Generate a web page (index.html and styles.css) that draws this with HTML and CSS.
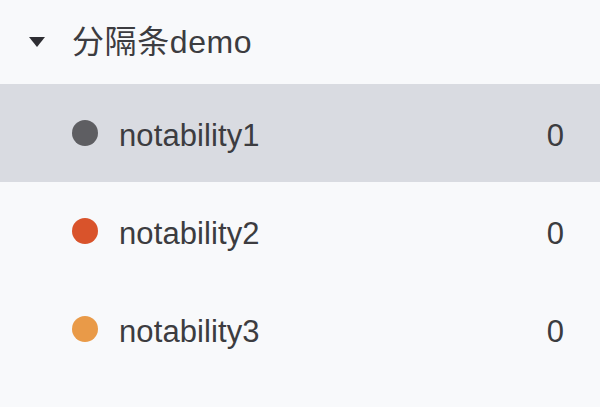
FILE: index.html
```html
<!DOCTYPE html>
<html lang="zh">
<head>
<meta charset="utf-8">
<link rel="stylesheet" href="styles.css">
</head>
<body>
<div class="tree">
  <div class="group-head">
    <span class="caret"></span>
    <span class="group-title">分隔条demo</span>
  </div>
  <div class="item active">
    <span class="dot dot-gray"></span>
    <span class="name">notability1</span>
    <span class="count">0</span>
  </div>
  <div class="item">
    <span class="dot dot-red"></span>
    <span class="name">notability2</span>
    <span class="count">0</span>
  </div>
  <div class="item">
    <span class="dot dot-orange"></span>
    <span class="name">notability3</span>
    <span class="count">0</span>
  </div>
</div>
</body>
</html>
```
FILE: styles.css
```css
html, body {
  margin: 0;
  padding: 0;
  background: #f8f9fb;
}
body {
  font-family: "Liberation Sans", "Noto Sans CJK SC", sans-serif;
  color: #3c3c40;
}
.tree {
  display: flex;
  flex-direction: column;
}
.group-head {
  height: 84px;
  display: flex;
  align-items: center;
  padding-left: 29px;
  box-sizing: border-box;
}
.caret {
  width: 0;
  height: 0;
  border-left: 8.5px solid transparent;
  border-right: 8.5px solid transparent;
  border-top: 10px solid #2e2e33;
  margin-right: 27px;
}
.group-title {
  font-size: 32px;
  line-height: 1;
  letter-spacing: 0.6px;
}
.item {
  height: 98px;
  display: flex;
  align-items: center;
  padding: 0 36px 0 72px;
  box-sizing: border-box;
}
.item.active {
  background: #d9dbe1;
}
.dot {
  width: 26px;
  height: 26px;
  border-radius: 50%;
  margin-right: 21px;
  flex: none;
}
.dot-gray { background: #5e5e62; }
.dot-red { background: #d9532b; }
.dot-orange { background: #e99a48; }
.name {
  flex: 1;
  font-size: 31px;
  line-height: 1;
  padding-top: 4px;
  letter-spacing: 0.1px;
}
.count {
  font-size: 31px;
  line-height: 1;
  padding-top: 4px;
}
```
